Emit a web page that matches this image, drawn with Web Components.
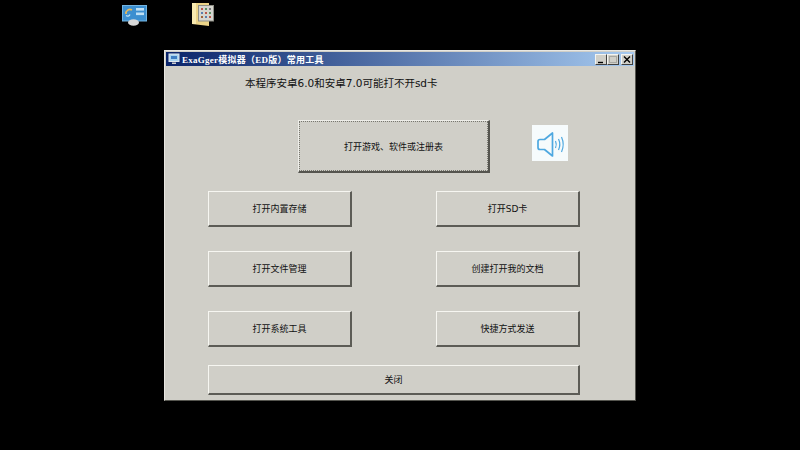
<!DOCTYPE html>
<html>
<head>
<meta charset="utf-8">
<style>
html, body { margin: 0; background: #000; }
</style>
</head>
<body>
<x-desktop>
  <x-desk-icon slot="icons" kind="panel" style="left:122px;top:5px"></x-desk-icon>
  <x-desk-icon slot="icons" kind="folder" style="left:191px;top:2px"></x-desk-icon>
  <x-window caption="ExaGger模拟器（ED版）常用工具">
    <x-tools></x-tools>
  </x-window>
</x-desktop>

<script>
const CJK = '"DejaVu Sans", "Noto Sans CJK SC", sans-serif';

class XDesktop extends HTMLElement {
    constructor() {
        super();
        this.attachShadow({ mode: 'open' });
        this.shadowRoot.innerHTML = `
            <style>
                :host {
                    display: block;
                    position: relative;
                    width: 800px;
                    height: 450px;
                    background: #000;
                    overflow: hidden;
                }
                ::slotted(x-window) {
                    position: absolute;
                    left: 164px;
                    top: 50px;
                }
            </style>
            <slot name="icons"></slot>
            <slot></slot>
        `;
    }
}

class XDeskIcon extends HTMLElement {
    constructor() {
        super();
        this.attachShadow({ mode: 'open' });
    }

    connectedCallback() {
        const panel = `
            <svg width="25" height="21" viewBox="0 0 25 21">
                <rect x="0.5" y="0.5" width="24" height="15.5" fill="#3c8fd0" stroke="#74b4e0"/>
                <path d="M4 9a4 4 0 0 1 6-4" fill="none" stroke="#e8b95a" stroke-width="1.6"/>
                <path d="M8 9.5a2.5 2.5 0 0 1-4 1" fill="none" stroke="#bfe3f7" stroke-width="1.2"/>
                <rect x="14" y="3" width="8" height="2.6" fill="#bfe0f5"/>
                <rect x="14" y="7.5" width="8" height="2.6" fill="#bfe0f5"/>
                <ellipse cx="11.5" cy="17.5" rx="5.5" ry="3.2" fill="#d8d8d8"/>
            </svg>`;
        const folder = `
            <svg width="25" height="25" viewBox="0 0 25 25">
                <path d="M1 1h17v23l-17-2z" fill="#ecd488"/>
                <path d="M1 1h4v21h-4z" fill="#f8eab0"/>
                <rect x="7.5" y="3.5" width="15" height="15.5" fill="#d6d6d0" stroke="#8f8f86"/>
                <path d="M10 6h2v2h-2z" fill="#b9564a"/>
                <path d="M14 6h2v2h-2z" fill="#5a9163"/>
                <path d="M18 6h2v2h-2z" fill="#777"/>
                <path d="M10 10h2v2h-2z" fill="#5a7fb0"/>
                <path d="M14 10h2v2h-2z" fill="#b9564a"/>
                <path d="M18 10h2v2h-2z" fill="#5a9163"/>
                <path d="M10 14h2v2h-2z" fill="#a0623d"/>
                <path d="M14 14h2v2h-2z" fill="#5a7fb0"/>
                <path d="M18 14h2v2h-2z" fill="#b9564a"/>
            </svg>`;
        this.shadowRoot.innerHTML = `
            <style>
                :host { display: block; position: absolute; line-height: 0; }
            </style>
            ${this.getAttribute('kind') === 'panel' ? panel : folder}
        `;
    }
}

class XWindow extends HTMLElement {
    constructor() {
        super();
        this.attachShadow({ mode: 'open' });
    }

    connectedCallback() {
        this.shadowRoot.innerHTML = `
            <style>
                :host {
                    display: flex;
                    flex-direction: column;
                    box-sizing: border-box;
                    width: 472px;
                    height: 351px;
                    background: #d0cfc8;
                    border: 1px solid;
                    border-color: #e8e7e2 #55554f #55554f #e8e7e2;
                    padding: 1px;
                }
                .title {
                    display: flex;
                    align-items: center;
                    height: 14px;
                    padding: 0 1px 0 2px;
                    background: linear-gradient(90deg, #0a246a, #a6caf0);
                    flex: none;
                }
                .app {
                    width: 12px;
                    height: 12px;
                    margin-right: 2px;
                    flex: none;
                }
                .caption {
                    flex: 1;
                    color: #fff;
                    font: bold 9px "Liberation Serif", "Noto Sans CJK SC", serif;
                    letter-spacing: 0.25px;
                    white-space: nowrap;
                }
                .controls {
                    display: flex;
                    align-items: center;
                }
                .controls span {
                    box-sizing: border-box;
                    width: 12px;
                    height: 11px;
                    background: #d0cfc8;
                    border: 1px solid;
                    border-color: #f4f4f0 #404040 #404040 #f4f4f0;
                    line-height: 0;
                }
                .controls span:last-child { margin-left: 2px; }
                .controls svg { display: block; }
                .client { flex: 1; }
            </style>
            <div class="title">
                <svg class="app" viewBox="0 0 12 12">
                    <rect x="1" y="1" width="10" height="7.5" fill="#a8d4f0" stroke="#dfe8ee"/>
                    <rect x="3" y="3" width="6" height="3" fill="#3f7fc4"/>
                    <path d="M4 9.5h4v1.5h-4z" fill="#cfcfcf"/>
                </svg>
                <span class="caption">${this.getAttribute('caption')}</span>
                <div class="controls">
                    <span><svg width="10" height="9" viewBox="0 0 10 9"><path d="M2 7.5h5" stroke="#000" stroke-width="1.4"/></svg></span>
                    <span><svg width="10" height="9" viewBox="0 0 10 9"><rect x="1.5" y="1.5" width="7" height="6" fill="none" stroke="#a8a8a2"/></svg></span>
                    <span><svg width="10" height="9" viewBox="0 0 10 9"><path d="M2 1.5l6 6M8 1.5l-6 6" stroke="#000" stroke-width="1.4"/></svg></span>
                </div>
            </div>
            <div class="client"><slot></slot></div>
        `;
    }
}

class XButton extends HTMLElement {
    constructor() {
        super();
        this.attachShadow({ mode: 'open' });
        this.shadowRoot.innerHTML = `
            <style>
                :host {
                    display: flex;
                    align-items: center;
                    justify-content: center;
                    box-sizing: border-box;
                    background: #d0cfc8;
                    border-style: solid;
                    border-width: 1px 2px 2px 1px;
                    border-color: #f6f6f1 #5c5c56 #5c5c56 #f6f6f1;
                    color: #111;
                    font: 9px ${CJK};
                    white-space: nowrap;
                }
                :host([default]) {
                    position: relative;
                    border-color: #eeeee9 #55554f #55554f #eeeee9;
                }
                .focus {
                    display: none;
                }
                :host([default]) .focus {
                    display: block;
                    position: absolute;
                    inset: 0;
                    border: 1px dotted #77776f;
                }
            </style>
            <span class="focus"></span>
            <slot></slot>
        `;
    }
}

class XSpeaker extends HTMLElement {
    constructor() {
        super();
        this.attachShadow({ mode: 'open' });
        this.shadowRoot.innerHTML = `
            <style>
                :host {
                    display: block;
                    width: 36px;
                    height: 36px;
                    background: #f6fbfc;
                    line-height: 0;
                }
            </style>
            <svg width="36" height="36" viewBox="0 0 36 36" fill="none" stroke="#4ea8e0">
                <path d="M8 14.5h4.5l8-6.5v23l-8-6.5h-4.5a2 2 0 0 1-2-2v-6a2 2 0 0 1 2-2z" stroke-width="1.7" stroke-linejoin="round"/>
                <path d="M23.5 16q1.6 3.5 0 7" stroke-width="1.2"/>
                <path d="M26.5 14q2.6 5.5 0 11" stroke-width="1.2"/>
                <path d="M29.5 12q3.4 7.5 0 15" stroke-width="1.2"/>
            </svg>
        `;
    }
}

class XTools extends HTMLElement {
    constructor() {
        super();
        this.attachShadow({ mode: 'open' });
        this.shadowRoot.innerHTML = `
            <style>
                :host {
                    display: block;
                    padding: 10px 0 0 42px;
                }
                .note {
                    height: 14px;
                    margin-left: 37px;
                    color: #111;
                    font: 10.5px/14px ${CJK};
                    white-space: nowrap;
                }
                .top {
                    display: flex;
                    align-items: flex-start;
                    gap: 42px;
                    margin: 30px 0 0 90px;
                }
                .top x-button {
                    width: 192px;
                    height: 53px;
                }
                .top x-speaker { margin-top: 5px; }
                .grid {
                    display: grid;
                    grid-template-columns: 144px 144px;
                    grid-auto-rows: 36px;
                    column-gap: 84px;
                    row-gap: 24px;
                    margin-top: 18px;
                }
                .close {
                    width: 372px;
                    height: 30px;
                    margin-top: 18px;
                }
            </style>
            <div class="note">本程序安卓6.0和安卓7.0可能打不开sd卡</div>
            <div class="top">
                <x-button default>打开游戏、软件或注册表</x-button>
                <x-speaker></x-speaker>
            </div>
            <div class="grid">
                <x-button>打开内置存储</x-button>
                <x-button>打开SD卡</x-button>
                <x-button>打开文件管理</x-button>
                <x-button>创建打开我的文档</x-button>
                <x-button>打开系统工具</x-button>
                <x-button>快捷方式发送</x-button>
            </div>
            <x-button class="close">关闭</x-button>
        `;
    }
}

customElements.define('x-desktop', XDesktop);
customElements.define('x-desk-icon', XDeskIcon);
customElements.define('x-window', XWindow);
customElements.define('x-button', XButton);
customElements.define('x-speaker', XSpeaker);
customElements.define('x-tools', XTools);
</script>
</body>
</html>
